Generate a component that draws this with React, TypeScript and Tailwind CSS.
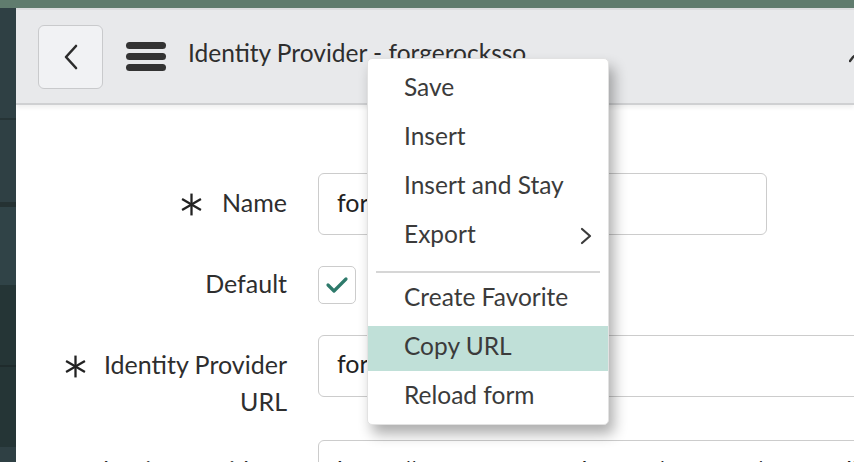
import React from 'react'

const font = { fontFamily: 'Lato, "Noto Sans", sans-serif' }

function Star() {
  return (
    <svg width="23" height="23" viewBox="0 0 20 20" className="shrink-0" aria-hidden>
      <g stroke="#222" strokeWidth="2" strokeLinecap="butt">
        <line x1="10" y1="0.5" x2="10" y2="19.5" />
        <line x1="1.8" y1="5.2" x2="18.2" y2="14.8" />
        <line x1="1.8" y1="14.8" x2="18.2" y2="5.2" />
      </g>
    </svg>
  )
}

function Sidebar() {
  return (
    <div className="flex w-4 shrink-0 flex-col">
      <div className="h-[110px] bg-[#2f4044]" />
      <div className="h-[2px] bg-[#263436]" />
      <div className="h-[82px] bg-[#2f4044]" />
      <div className="h-[5px] bg-[#253233]" />
      <div className="h-[78px] bg-[#304347]" />
      <div className="h-[80px] bg-[#253536]" />
      <div className="h-[2px] bg-[#1f2b2c]" />
      <div className="h-[80px] bg-[#253536]" />
      <div className="flex-1 bg-[#2f4044]" />
    </div>
  )
}

function Header() {
  return (
    <header className="flex h-[97px] shrink-0 items-center border-t-2 border-b-2 border-t-[#dcdddf] border-b-[#cfd0d2] bg-[#e8e9eb] pl-[22px] shadow-[0_3px_4px_rgba(0,0,0,0.06)]">
      <button className="flex h-[64px] w-[65px] shrink-0 items-center justify-center rounded-[6px] border border-[#c9cacc] bg-[#f1f2f4]">
        <svg width="18" height="28" viewBox="0 0 18 28" aria-hidden>
          <polyline points="14,3 4,14 14,25" fill="none" stroke="#2b2b2b" strokeWidth="2.6" strokeLinecap="round" strokeLinejoin="round" />
        </svg>
      </button>
      <div className="ml-[23px] flex w-10 shrink-0 flex-col gap-[4px]">
        <span className="h-[7px] rounded-full bg-[#333]" />
        <span className="h-[7px] rounded-full bg-[#333]" />
        <span className="h-[7px] rounded-full bg-[#333]" />
      </div>
      <h1 className="ml-[22px] mb-[6px] whitespace-nowrap text-[24.5px] text-[#2e2e2e]">
        Identity Provider - forgerocksso
      </h1>
      <div className="flex-1" />
      <div className="relative h-6 w-[5px] shrink-0">
        <svg width="24" height="24" viewBox="0 0 24 24" className="absolute left-0 top-[2px]" aria-hidden>
          <path d="M1 14 L4 10 L14 2" fill="none" stroke="#333" strokeWidth="2.4" strokeLinecap="round" />
        </svg>
      </div>
    </header>
  )
}

function Menu() {
  const item = 'flex h-[45px] shrink-0 items-center pl-[36px] pr-4 pb-[5px]'
  return (
    <div className="absolute left-[367px] top-[58px] flex w-[242px] flex-col gap-1 rounded-[5px] border border-[#e2e2e2] bg-white pt-2 pb-1 text-[24.5px] text-[#3b3b3b] shadow-[5px_9px_14px_rgba(0,0,0,0.32)]">
      <div className={item}>Save</div>
      <div className={item}>Insert</div>
      <div className={item}>Insert and Stay</div>
      <div className={`${item} justify-between`}>
        <span>Export</span>
        <svg width="12" height="18" viewBox="0 0 12 18" className="mt-[4px]" aria-hidden>
          <polyline points="2,2 10,9 2,16" fill="none" stroke="#3b3b3b" strokeWidth="2.2" strokeLinecap="round" strokeLinejoin="round" />
        </svg>
      </div>
      <div className="mx-2 mt-2 h-[2px] bg-[#d6d6d6]" />
      <div className={item}>Create Favorite</div>
      <div className={`${item} bg-[#c0e0d8]`}>Copy URL</div>
      <div className={item}>Reload form</div>
    </div>
  )
}

function Form() {
  return (
    <div className="flex flex-col pt-[68px] text-[25px] text-[#2e2e2e]">
      <div className="flex items-center">
        <div className="flex w-[271px] shrink-0 items-center justify-end gap-[19px]">
          <Star />
          <span className="mb-[3px]">Name</span>
        </div>
        <div className="ml-[31px] flex h-[62px] w-[449px] shrink-0 items-center rounded-[6px] border-[1.5px] border-[#cccccc] pb-[3px] pl-[18px] text-[#222]">
          forgerocksso
        </div>
      </div>
      <div className="mt-[30px] flex items-center">
        <div className="mb-[3px] w-[271px] shrink-0 text-right">Default</div>
        <div className="ml-[31px] flex h-[38px] w-[38px] shrink-0 items-center justify-center rounded-[5px] border-[1.5px] border-[#cccccc]">
          <svg width="24" height="20" viewBox="0 0 24 20" aria-hidden>
            <polyline points="3,10 9,16 21,4" fill="none" stroke="#2e7a6b" strokeWidth="3.2" strokeLinecap="round" strokeLinejoin="round" />
          </svg>
        </div>
      </div>
      <div className="mt-[29px] flex items-start">
        <div className="flex w-[271px] shrink-0 items-start justify-end gap-[17px] pt-[11px]">
          <span className="mt-[9px]">
            <Star />
          </span>
          <span className="text-right leading-[37px]">
            Identity Provider
            <br />
            URL
          </span>
        </div>
        <div className="ml-[31px] flex h-[62px] w-[620px] shrink-0 items-center rounded-[6px] border-[1.5px] border-[#cccccc] pb-[3px] pl-[18px] text-[#222]">
          forgerocksso
        </div>
      </div>
      <div className="mt-[20px] flex items-start">
        <div className="flex w-[271px] shrink-0 items-start justify-end pt-[12px]">
          <span className="text-right leading-[37px]">
            Identity Provider's
            <br />
            AuthnRequest
          </span>
        </div>
        <div className="ml-[31px] flex h-[62px] w-[620px] shrink-0 items-center rounded-[6px] border-[1.5px] border-[#cccccc] pl-[18px] text-[#222]">
          https://openam.example.com/openam/SSORedirect/metaAlias/idp
        </div>
      </div>
    </div>
  )
}

export default function App() {
  return (
    <div className="relative flex h-[462px] w-[854px] flex-col overflow-hidden bg-white" style={font}>
      <div className="h-2 shrink-0 bg-[#607c6e]" />
      <div className="flex min-h-0 flex-1">
        <Sidebar />
        <main className="flex min-w-0 flex-1 flex-col overflow-hidden">
          <Header />
          <Form />
        </main>
      </div>
      <Menu />
    </div>
  )
}
